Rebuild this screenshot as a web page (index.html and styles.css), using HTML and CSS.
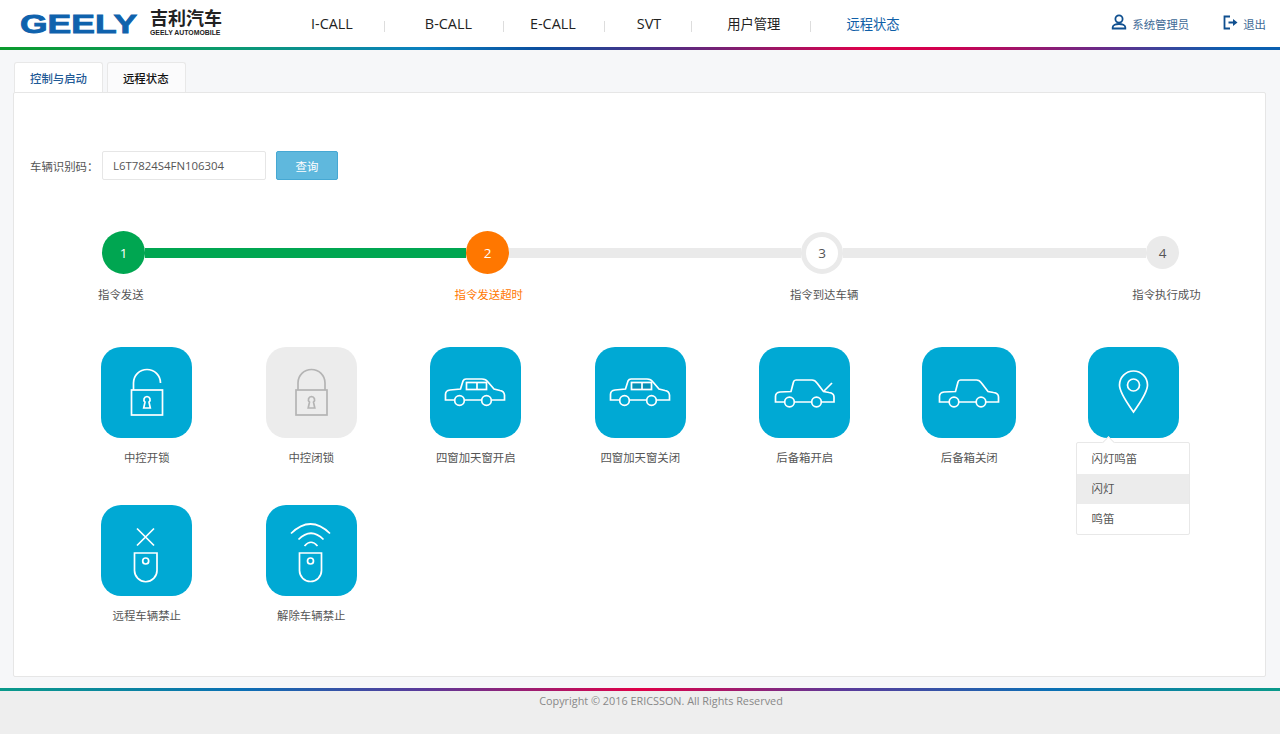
FILE: index.html
```html
<!DOCTYPE html>
<html>
<head>
	<meta charset="UTF-8">
	<title>远程状态</title>
	<link rel="stylesheet" href="styles.css">
</head>
<body>
	<div class="Header">
		<div class="Logo">
			<span class="LogoMark">GEELY</span>
			<span class="LogoCn"><b>吉利汽车</b><small>GEELY AUTOMOBILE</small></span>
		</div>
		<ul class="Nav">
			<li>I-CALL</li>
			<li>B-CALL</li>
			<li>E-CALL</li>
			<li>SVT</li>
			<li class="NavCn">用户管理</li>
			<li class="NavCn NavActive">远程状态</li>
		</ul>
		<div class="UserBox">
			<span class="UserItem">
				<svg width="16" height="16" viewBox="0 0 16 16"><circle cx="8" cy="5" r="3.600"/><path d="M8 10c-2 0-3 .2-4.300 .8-1.300 .7-2 1.500-2 2.500v1.200h12.600v-1.200c0-1-.7-1.800-2-2.500-1.300-.6-2.300-.8-4.300-.8z"/></svg>
				系统管理员
			</span>
			<span class="UserItem">
				<svg width="15" height="15" viewBox="0 0 15 15"><path d="M7 1.500H1.500v12H7M5.500 7.500h5"/><path class="Fill" d="M10 4l4.500 3.500L10 11z"/></svg>
				退出
			</span>
		</div>
	</div>
	<div class="RainbowTop"></div>

	<div class="Main">
		<div class="Tabs">
			<div class="Tab TabActive">控制与启动</div>
			<div class="Tab">远程状态</div>
		</div>
		<div class="Panel">
			<div class="QueryRow">
				<label class="QueryLabel">车辆识别码：</label>
				<input class="QueryInput" type="text" value="L6T7824S4FN106304">
				<button class="QueryBtn">查询</button>
			</div>

			<div class="Steps">
				<div class="Circle CircleGreen">1</div>
				<div class="Line LineGreen Line_1"></div>
				<div class="Circle CircleOrange">2</div>
				<div class="Line Line_2"></div>
				<div class="Circle CircleRing">3</div>
				<div class="Line Line_3"></div>
				<div class="Circle CircleGrey">4</div>
			</div>
			<div class="StepLabels">
				<span>指令发送</span>
				<span class="StepLabelOrange">指令发送超时</span>
				<span>指令到达车辆</span>
				<span>指令执行成功</span>
			</div>

			<div class="Actions">
				<div class="Action">
					<div class="Tile">
						<svg viewBox="0 0 91 91"><rect x="30.500" y="43" width="31" height="25"/><path d="M32.500 43V36a13.500 13.500 0 0 1 27 0"/><path d="M46 49.500a3.200 3.200 0 0 0-2 5.600l-1.300 5.900h6.600L48 55.100a3.200 3.200 0 0 0-2-5.600z"/></svg>
					</div>
					<div class="ActionName">中控开锁</div>
				</div>
				<div class="Action">
					<div class="Tile TileOff">
						<svg viewBox="0 0 91 91"><rect x="30" y="43" width="31" height="25"/><path d="M32 43V36a13.500 13.500 0 0 1 27 0V43"/><path d="M45.500 49.500a3.200 3.200 0 0 0-2 5.600l-1.300 5.900h6.600l-1.300-5.900a3.200 3.200 0 0 0-2-5.600z"/></svg>
					</div>
					<div class="ActionName">中控闭锁</div>
				</div>
				<div class="Action">
					<div class="Tile">
						<svg viewBox="0 0 91 91"><path d="M24.500 53H15.500V47.500Q15.500 43.500 20 43L30.500 42L33 34Q34 32 36 32H52Q56 32 58 35L64 42L70 43.500Q74 44 74.500 48V53H61.500M34.500 53H51.500"/><circle cx="29.500" cy="53.500" r="4.800"/><circle cx="56.500" cy="53.500" r="4.800"/><rect x="36.500" y="35.500" width="20" height="7"/><path d="M47 35.500V42.500"/></svg>
					</div>
					<div class="ActionName">四窗加天窗开启</div>
				</div>
				<div class="Action">
					<div class="Tile">
						<svg viewBox="0 0 91 91"><path d="M24.500 53H15.500V47.500Q15.500 43.500 20 43L30.500 42L33 34Q34 32 36 32H52Q56 32 58 35L64 42L70 43.500Q74 44 74.500 48V53H61.500M34.500 53H51.500"/><circle cx="29.500" cy="53.500" r="4.800"/><circle cx="56.500" cy="53.500" r="4.800"/><rect class="Glass" x="36.500" y="35.500" width="20" height="7"/><path d="M47 35.500V42.500"/></svg>
					</div>
					<div class="ActionName">四窗加天窗关闭</div>
				</div>
				<div class="Action">
					<div class="Tile">
						<svg viewBox="0 0 91 91"><path d="M25.500 55H16.500V49.500Q16.500 45.500 21 45L32 44.500L34.500 35Q35 33 37 33H53Q56 33 58 36L64.500 44.500L70 45.500Q75 46 75 50V55H62.500M35.500 55H52.500"/><circle cx="30.500" cy="55" r="4.800"/><circle cx="57.500" cy="55" r="4.800"/><path d="M65 44L73 36"/></svg>
					</div>
					<div class="ActionName">后备箱开启</div>
				</div>
				<div class="Action">
					<div class="Tile TileWide">
						<svg viewBox="0 0 94 91"><path d="M27 55H17.500V49.500Q17.500 45.500 22 45L33.500 44.500L36 35Q36.500 33 38.500 33H54.500Q57.500 33 59.500 36L66 44.500L71.500 45.500Q76.500 46 76.500 50V55H64M37 55H54"/><circle cx="32" cy="55" r="4.800"/><circle cx="59" cy="55" r="4.800"/></svg>
					</div>
					<div class="ActionName">后备箱关闭</div>
				</div>
				<div class="Action">
					<div class="Tile">
						<svg viewBox="0 0 91 91"><path d="M45.500 65C40 57 31.500 46 31.500 38a14 14 0 0 1 28 0C59.500 46 51 57 45.500 65z"/><circle cx="45.500" cy="38" r="6"/></svg>
					</div>
					<div class="Popup">
						<div class="PopupItem">闪灯鸣笛</div>
						<div class="PopupItem PopupItemHover">闪灯</div>
						<div class="PopupItem">鸣笛</div>
					</div>
				</div>
				<div class="Action">
					<div class="Tile">
						<svg viewBox="0 0 91 91"><path d="M36 23.500L53 40.500M53 23.500L36 40.500"/><path d="M33.500 48H56V65.500a11.200 11.200 0 0 1-22.500 0z"/><circle cx="44.700" cy="56" r="3"/></svg>
					</div>
					<div class="ActionName">远程车辆禁止</div>
				</div>
				<div class="Action">
					<div class="Tile">
						<svg viewBox="0 0 91 91"><path d="M25 28.500Q44.500 9.500 64 28.500M32.500 34.500Q45 22 57.500 34.500M38.500 41Q45 33.500 51.500 41"/><path d="M33.500 48H55.500V65.500a11 11 0 0 1-22 0z"/><circle cx="44.500" cy="56" r="3"/></svg>
					</div>
					<div class="ActionName">解除车辆禁止</div>
				</div>
			</div>
		</div>
	</div>

	<div class="RainbowBottom"></div>
	<div class="Footer">Copyright © 2016 ERICSSON. All Rights Reserved</div>
</body>
</html>
```

FILE: styles.css
```css
* {
	box-sizing: border-box;
}

html, body {
	height: 100%;
}

body {
	margin: 0;
	background-color: #f6f7f9;
	color: #555;
	font-family: "Open Sans", "Noto Sans CJK SC", sans-serif;
	font-size: 11.4px;
	display: flex;
	flex-direction: column;
	overflow: hidden;
}

/* header */
.Header {
	height: 47px;
	background-color: #fff;
	display: flex;
	align-items: center;
	flex: none;
}

.Logo {
	width: 311px;
	padding-left: 20px;
	display: flex;
	align-items: center;
	flex: none;
}

.LogoMark {
	width: 119px;
	color: #0f62ad;
	font-family: "Liberation Sans", sans-serif;
	font-size: 25px;
	font-weight: bold;
	line-height: 22px;
	transform: scaleX(1.42);
	transform-origin: left center;
	-webkit-text-stroke: .8px #0f62ad;
}

.LogoCn {
	width: 72px;
	margin-left: 11px;
	color: #222;
	font-family: "Liberation Sans", "Noto Sans CJK SC", sans-serif;
	display: flex;
	flex-direction: column;
}

.LogoCn b {
	font-size: 18px;
	line-height: 17px;
}

.LogoCn small {
	margin-top: 2px;
	font-size: 6.900px;
	font-weight: bold;
	line-height: 6px;
	white-space: nowrap;
}

.Nav {
	margin: 0;
	padding: 0;
	list-style: none;
	display: flex;
	align-items: center;
	color: #222;
	font-size: 14.400px;
	flex: 1;
}

.Nav li {
	position: relative;
	padding-left: 35px;
	padding-right: 31px;
	white-space: nowrap;
}

.Nav li:nth-child(1) {
	padding-left: 0;
	padding-right: 32px;
}

.Nav li:nth-child(2) {
	padding-left: 40px;
	padding-right: 32px;
}

.Nav li:nth-child(3) {
	padding-left: 26px;
	padding-right: 29px;
}

.Nav li:nth-child(4) {
	padding-left: 32px;
	padding-right: 31px;
}

.Nav li:not(:last-child)::after {
	content: "";
	position: absolute;
	right: 0;
	top: 7px;
	width: 1px;
	height: 11px;
	background-color: #ddd;
}

.Nav .NavCn {
	font-size: 13.300px;
}

.Nav .NavActive {
	color: #0f5fa8;
}

.UserBox {
	display: flex;
	align-items: center;
	padding-right: 14px;
	color: #3d6a96;
	font-size: 11.400px;
}

.UserItem {
	display: flex;
	align-items: center;
	gap: 5px;
	margin-left: 34px;
}

.UserItem svg {
	fill: none;
	stroke: #0f4f8f;
	stroke-width: 1.800;
	margin-top: -3px;
}

.UserItem .Fill {
	fill: #0f4f8f;
	stroke: none;
}

.RainbowTop {
	height: 3px;
	flex: none;
	background: linear-gradient(to right, #0a9a2c 0%, #0a9a70 18%, #0a80c0 33%, #0a4f9f 42%, #5a2a80 53%, #e0004a 68%, #d0004f 74%, #6a2a88 86%, #0a5fb0 96%, #0a5fb0 100%);
}

/* tabs and panel */
.Main {
	flex: 1;
	padding: 12px 14px 11px 13px;
	display: flex;
	flex-direction: column;
	min-height: 0;
}

.Tabs {
	display: flex;
	gap: 4px;
	padding-left: 1px;
	margin-bottom: -1px;
	position: relative;
	flex: none;
}

.Tab {
	height: 31px;
	line-height: 31px;
	padding: 0 16px 0 15px;
	background-color: #fbfbfc;
	border: 1px solid #e8e8e8;
	border-bottom: 1px solid #e6e6e6;
	border-radius: 3px 3px 0 0;
	color: #111;
	font-weight: 500;
}

.TabActive {
	padding-right: 15px;
	background-color: #fff;
	color: #1f5a96;
	border-bottom-color: #fff;
}

.Panel {
	flex: 1;
	background-color: #fff;
	border: 1px solid #e6e6e6;
	border-radius: 2px;
	position: relative;
}

.QueryRow {
	display: flex;
	align-items: center;
	margin-top: 58px;
	padding-left: 16px;
}

.QueryLabel {
	width: 72px;
	color: #555;
}

.QueryInput {
	width: 164px;
	height: 29px;
	padding: 0 10px;
	border: 1px solid #e6e6e6;
	border-radius: 2px;
	color: #555;
	font-family: inherit;
	font-size: 11.400px;
}

.QueryBtn {
	width: 62px;
	height: 29px;
	margin-left: 10px;
	background-color: #5fb8dd;
	border: 1px solid #46a8d3;
	border-radius: 2px;
	color: #fff;
	font-family: inherit;
	font-size: 11.400px;
}

/* steps */
.Steps {
	display: flex;
	align-items: center;
	height: 43px;
	margin-top: 51px;
	padding-left: 88px;
}

.Circle {
	border-radius: 50%;
	display: flex;
	align-items: center;
	justify-content: center;
	flex: none;
	font-size: 13.500px;
}

.CircleGreen {
	width: 43px;
	height: 43px;
	background-color: #00a651;
	color: #fff;
}

.CircleOrange {
	width: 43px;
	height: 43px;
	background-color: #ff7700;
	color: #fff;
}

.CircleRing {
	width: 42px;
	height: 42px;
	background-color: #fff;
	border: 5px solid #eaeaea;
	color: #555;
}

.CircleGrey {
	width: 33px;
	height: 33px;
	background-color: #eaeaea;
	color: #555;
}

.Line {
	height: 10px;
	background-color: #eaeaea;
	flex: none;
}

.LineGreen {
	background-color: #00a651;
}

.Line_1 {
	width: 321px;
}

.Line_2 {
	width: 292px;
}

.Line_3 {
	width: 303px;
}

.StepLabels {
	display: flex;
	margin-top: 12px;
	padding-left: 84px;
	line-height: 18px;
}

.StepLabels span:nth-child(2) {
	margin-left: 311px;
}

.StepLabels span:nth-child(3) {
	margin-left: 267px;
}

.StepLabels span:nth-child(4) {
	margin-left: 274px;
}

.StepLabelOrange {
	color: #ff7700;
}

/* action tiles */
.Actions {
	display: grid;
	grid-template-columns: repeat(7, 164.500px);
	grid-auto-rows: 158px;
	margin-top: 43px;
	margin-left: 50.500px;
}

.Action {
	position: relative;
	display: flex;
	flex-direction: column;
	align-items: center;
}

.Tile {
	width: 91px;
	height: 91px;
	background-color: #00a9d4;
	border-radius: 20px;
	flex: none;
}

.TileWide {
	width: 94px;
}

.Tile svg {
	display: block;
	width: 100%;
	height: 100%;
	fill: none;
	stroke: #fff;
	stroke-width: 1.700;
}

.Tile .Glass {
	fill: #0790b5;
}

.TileOff {
	background-color: #ececec;
}

.TileOff svg {
	stroke: #b4b4b4;
}

.ActionName {
	margin-top: 11px;
	line-height: 18px;
	color: #555;
}

.Popup {
	position: absolute;
	top: 95px;
	left: 24px;
	width: 114px;
	padding-top: 1px;
	background-color: #fff;
	border: 1px solid #e8e8e8;
	border-radius: 2px;
	z-index: 2;
}

.Popup::before {
	content: "";
	position: absolute;
	top: -5px;
	left: 27px;
	width: 8px;
	height: 8px;
	background-color: #fff;
	border-top: 1px solid #e8e8e8;
	border-left: 1px solid #e8e8e8;
	transform: rotate(45deg);
}

.PopupItem {
	position: relative;
	height: 30px;
	line-height: 30px;
	padding-left: 15px;
	color: #555;
}

.PopupItemHover {
	background-color: #ececec;
}

/* footer */
.RainbowBottom {
	height: 3px;
	flex: none;
	background: linear-gradient(to right, #0a9a8a 0%, #0b6fb5 19%, #5a3a9a 33%, #e00048 50%, #5a3a9a 66%, #0b6fb5 82%, #0a9a8a 100%);
}

.Footer {
	height: 43px;
	flex: none;
	padding-left: 42px;
	background-color: #eee;
	color: #888;
	font-size: 10.850px;
	line-height: 20px;
	text-align: center;
}
```
